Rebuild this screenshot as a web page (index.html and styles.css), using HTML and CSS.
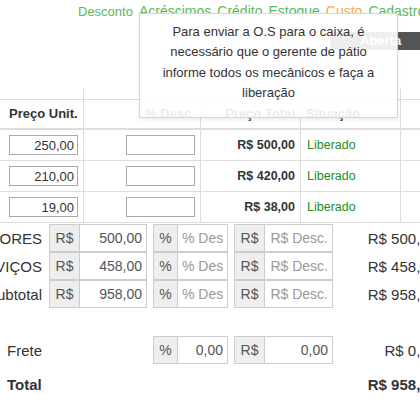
FILE: index.html
```html
<!DOCTYPE html>
<html lang="pt-BR">
<head>
<meta charset="utf-8">
<title>O.S</title>
<link rel="stylesheet" href="styles.css">
</head>
<body>
<div class="viewport">
  <div class="page">
    <div class="tags">
      <span class="tag tag-green tag-first">Desconto</span>
      <span class="tag tag-green">Acréscimos</span>
      <span class="tag tag-green">Crédito</span>
      <span class="tag tag-green">Estoque</span>
      <span class="tag tag-orange">Custo</span>
      <span class="tag tag-green">Cadastro</span>
    </div>
    <div class="status-row"><span class="status">Aberta</span></div>

    <div class="items">
      <div class="row row-top"><div></div><div></div><div></div></div>
      <div class="row row-head">
        <div class="cell cell-first">Preço Unit.</div>
        <div class="cell right">% Desc.</div>
        <div class="cell right">Preço Total</div>
        <div class="cell">Situação</div>
        <div class="cell"></div>
      </div>
      <div class="row row-item">
        <div class="cell right"><input class="cell-input" type="text" value="250,00"></div>
        <div class="cell right"><input class="cell-input" type="text" value=""></div>
        <div class="cell right strong">R$ 500,00</div>
        <div class="cell ok">Liberado</div>
        <div class="cell"><span class="remove"></span></div>
      </div>
      <div class="row row-item">
        <div class="cell right"><input class="cell-input" type="text" value="210,00"></div>
        <div class="cell right"><input class="cell-input" type="text" value=""></div>
        <div class="cell right strong">R$ 420,00</div>
        <div class="cell ok">Liberado</div>
        <div class="cell"><span class="remove"></span></div>
      </div>
      <div class="row row-item">
        <div class="cell right"><input class="cell-input" type="text" value="19,00"></div>
        <div class="cell right"><input class="cell-input" type="text" value=""></div>
        <div class="cell right strong">R$ 38,00</div>
        <div class="cell ok">Liberado</div>
        <div class="cell"><span class="remove"></span></div>
      </div>
    </div>

    <div class="summary">
      <div class="sum-row">
        <div class="sum-label">VALORES</div>
        <div class="group group-a"><span class="addon">R$</span><input class="gin" type="text" value="500,00"></div>
        <div class="group group-b"><span class="addon">%</span><input class="gin" type="text" placeholder="% Desc."></div>
        <div class="group group-c"><span class="addon">R$</span><input class="gin" type="text" placeholder="R$ Desc."></div>
        <div class="sum-value">R$ 500,00</div>
      </div>
      <div class="sum-row">
        <div class="sum-label">SERVIÇOS</div>
        <div class="group group-a"><span class="addon">R$</span><input class="gin" type="text" value="458,00"></div>
        <div class="group group-b"><span class="addon">%</span><input class="gin" type="text" placeholder="% Desc."></div>
        <div class="group group-c"><span class="addon">R$</span><input class="gin" type="text" placeholder="R$ Desc."></div>
        <div class="sum-value">R$ 458,00</div>
      </div>
      <div class="sum-row">
        <div class="sum-label">Subtotal</div>
        <div class="group group-a"><span class="addon">R$</span><input class="gin" type="text" value="958,00"></div>
        <div class="group group-b"><span class="addon">%</span><input class="gin" type="text" placeholder="% Desc."></div>
        <div class="group group-c"><span class="addon">R$</span><input class="gin" type="text" placeholder="R$ Desc."></div>
        <div class="sum-value">R$ 958,00</div>
      </div>

      <div class="sum-row sum-frete">
        <div class="sum-label-left">Frete</div>
        <div class="group group-b"><span class="addon">%</span><input class="gin" type="text" value="0,00"></div>
        <div class="group group-c"><span class="addon">R$</span><input class="gin" type="text" value="0,00"></div>
        <div class="sum-value">R$ 0,00</div>
      </div>

      <div class="sum-row sum-total">
        <div class="sum-label-left bold">Total</div>
        <div class="sum-value bold">R$ 958,00</div>
      </div>
    </div>

    <div class="tip">Para enviar a O.S para o caixa, é necessário que o gerente de pátio informe todos os mecânicos e faça a liberação</div>
  </div>
</div>
</body>
</html>
```

FILE: styles.css
```css
* { box-sizing: border-box; }

body {
  margin: 0;
  font-family: "Liberation Sans", Arial, sans-serif;
  color: #333;
  background: #fff;
}

.viewport {
  width: 420px;
  height: 404px;
  overflow: hidden;
  position: relative;
}

.page {
  width: 470px;
}

/* top tags */
.tags {
  display: flex;
  align-items: baseline;
  gap: 6px;
  height: 22px;
  line-height: 22px;
  padding-left: 78px;
  font-size: 14px;
  white-space: nowrap;
}
.tag-first { font-size: 13px; color: #55a844; }
.tag-green { color: #5cb85c; }
.tag-orange { color: #f0ad4e; }

.status-row {
  display: flex;
  margin-top: 10px;
  height: 18px;
  padding-left: 330px;
}
.status {
  background: #555;
  color: #fff;
  font-weight: bold;
  font-size: 13px;
  line-height: 18px;
  padding: 0 50px 0 30px;
  border-radius: 6px;
}

/* items table */
.items {
  margin-top: 39px;
  font-size: 12.5px;
}
.row {
  display: grid;
  grid-template-columns: 84px 117px 100px 100px 69px;
}
.row > div {
  border-right: 1px solid #ddd;
  border-bottom: 1px solid #ddd;
}
.row-top {
  grid-template-columns: 84px 317px 69px;
  height: 11px;
}
.cell {
  display: flex;
  align-items: center;
  padding: 0 5px;
  white-space: nowrap;
}
.cell.right { justify-content: flex-end; }
.row-head { height: 30px; font-size: 13px; }
.row-head > .cell {
  border-bottom-width: 2px;
  font-weight: bold;
  padding-bottom: 2px;
}
.row-head > .cell-first { padding-left: 9px; padding-right: 0; }
.row-item { height: 31px; }
.strong { font-weight: bold; }
.ok { color: #1a8f1a; padding-left: 6px; }

.cell-input {
  width: 69px;
  height: 20px;
  border: 1px solid #a9a9a9;
  border-radius: 0;
  padding: 0 3px;
  font-family: "Liberation Sans", Arial, sans-serif;
  font-size: 13px;
  color: #333;
  text-align: right;
  background: #fff;
}

.remove {
  display: inline-block;
  width: 8px;
  height: 2px;
  margin-left: 15px;
  background: #e41b1b;
}

/* summary */
.summary {
  margin-top: 1px;
  font-size: 15px;
}
.sum-row {
  display: grid;
  grid-template-columns: 43px 98px 75px 99px 98px;
  column-gap: 6px;
  height: 28px;
  align-items: center;
}
.sum-label {
  display: flex;
  justify-content: flex-end;
  padding-right: 1px;
  white-space: nowrap;
}
.sum-label-left {
  grid-column: 1 / 3;
  padding-left: 7px;
}
.sum-value {
  grid-column: 5;
  text-align: right;
  white-space: nowrap;
}
.bold { font-weight: bold; }

.sum-frete { margin-top: 28px; }
.sum-frete .group-b { grid-column: 3; }
.sum-frete .group-c { grid-column: 4; }
.sum-total { margin-top: 6px; }

.group {
  display: flex;
  height: 28px;
}
.addon {
  display: flex;
  align-items: center;
  justify-content: center;
  border: 1px solid #ccc;
  background: #eee;
  color: #555;
  font-size: 14px;
}
.group-a .addon, .group-c .addon { width: 31px; }
.group-b .addon { width: 25px; }
.gin {
  flex: 1;
  min-width: 0;
  height: 28px;
  border: 1px solid #ccc;
  border-left: 0;
  border-radius: 0;
  padding: 0 4px;
  font-family: "Liberation Sans", Arial, sans-serif;
  font-size: 14px;
  color: #555;
  text-align: right;
  background: #fff;
}
.gin::placeholder { color: #999; }

/* tooltip over content */
.tip {
  position: absolute;
  left: 139px;
  top: 13px;
  width: 259px;
  padding: 8px 10px 13px;
  background: rgba(255, 255, 255, 0.9);
  border: 1px solid #d6d6d6;
  box-shadow: 0 2px 4px rgba(0, 0, 0, 0.08);
  font-size: 13px;
  line-height: 20.4px;
  text-align: center;
  color: #333;
}
```
